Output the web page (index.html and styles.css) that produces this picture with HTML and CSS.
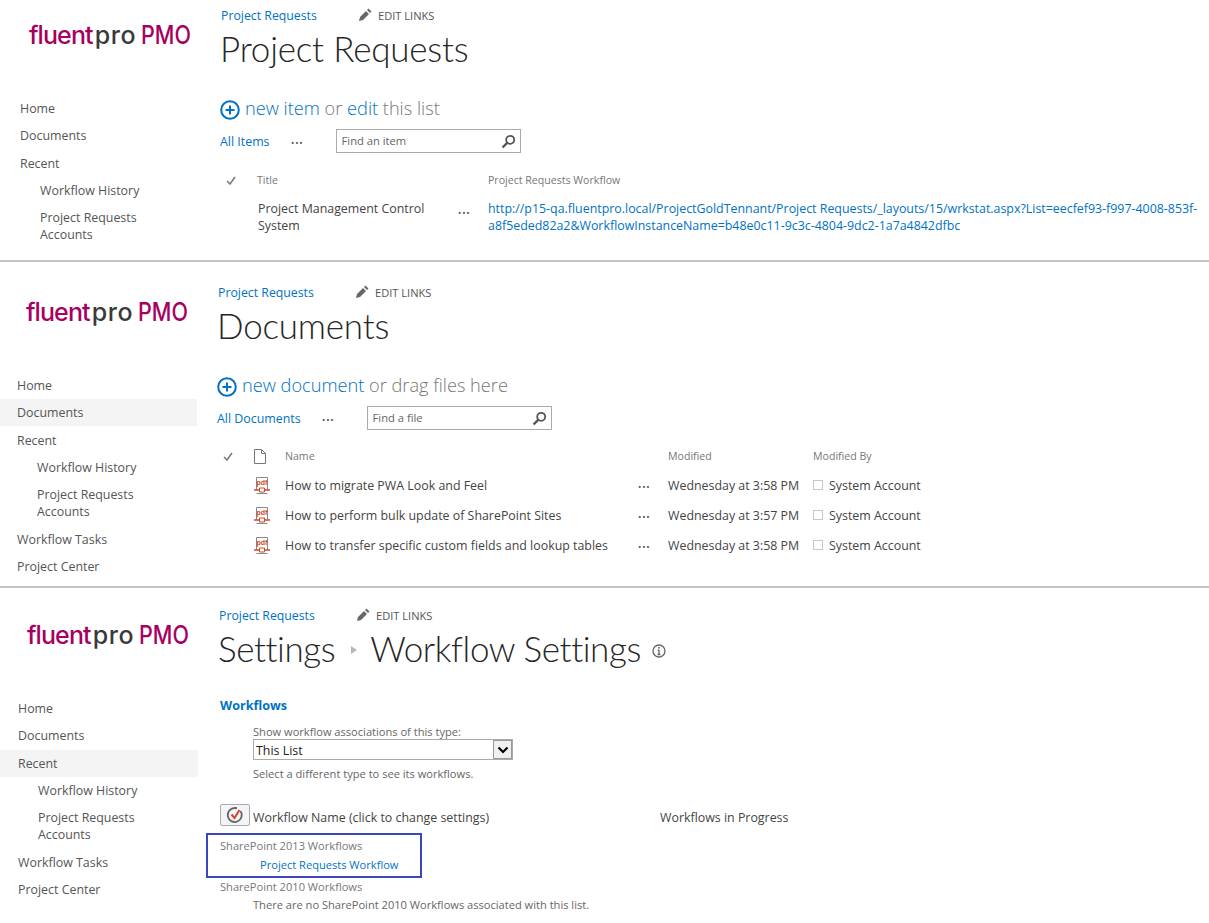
FILE: index.html
```html
<!DOCTYPE html>
<html>
<head>
	<title>Project Requests</title>
	<meta charset="utf-8">
	<link rel="stylesheet" href="styles.css">
</head>
<body>

<!-- list view -->
<section class="site site-list">
	<div class="side">
		<div class="logo"><span class="logo-fluent">fluent</span><span class="logo-pro">pro</span><span class="logo-pmo">PMO</span></div>
		<ul class="nav">
			<li>Home</li>
			<li>Documents</li>
			<li class="group">Recent</li>
			<li class="sub">Workflow History</li>
			<li class="sub">Project Requests<br>Accounts</li>
		</ul>
	</div>
	<div class="main">
		<div class="crumbs">
			<a class="crumb">Project Requests</a>
			<svg class="pencil" width="14" height="14" viewBox="0 0 14 14"><path d="M1 13l1-4 6-6 3 3-6 6zM9 2l1.500-1.500 3 3L12 5z" fill="#666"/></svg>
			<span class="edit">EDIT LINKS</span>
		</div>
		<h1 class="title">Project Requests</h1>
		<div class="command">
			<svg class="plus" width="20" height="20" viewBox="0 0 20 20"><circle cx="10" cy="10" r="8.8" fill="none" stroke="#0072c6" stroke-width="2"/><path d="M5.5 10h9M10 5.5v9" stroke="#0072c6" stroke-width="2"/></svg>
			<span><a>new item</a> or <a>edit</a> this list</span>
		</div>
		<div class="views">
			<a class="view view-items">All Items</a>
			<span class="dots">•••</span>
			<div class="search">
				<span>Find an item</span>
				<svg width="15" height="15" viewBox="0 0 15 15"><circle cx="9.2" cy="5.8" r="4" fill="none" stroke="#555" stroke-width="1.8"/><path d="M6.4 8.7L1.6 13.5" stroke="#555" stroke-width="2.4"/></svg>
			</div>
		</div>
		<div class="grid grid-list grid-head">
			<svg class="tick" width="10" height="9" viewBox="0 0 10 9"><path d="M1 5l3 3 5-7" fill="none" stroke="#777" stroke-width="1.5"/></svg>
			<span>Title</span>
			<span></span>
			<span>Project Requests Workflow</span>
		</div>
		<div class="grid grid-list row-tall">
			<span></span>
			<span class="cell-title">Project Management Control System</span>
			<span class="dots">•••</span>
			<a class="long-link">http://p15-qa.fluentpro.local/ProjectGoldTennant/Project Requests/_layouts/15/wrkstat.aspx?List=eecfef93-f997-4008-853f-<br>a8f5eded82a2&amp;WorkflowInstanceName=b48e0c11-9c3c-4804-9dc2-1a7a4842dfbc</a>
		</div>
	</div>
</section>

<!-- documents library -->
<section class="site site-docs">
	<div class="side">
		<div class="logo"><span class="logo-fluent">fluent</span><span class="logo-pro">pro</span><span class="logo-pmo">PMO</span></div>
		<ul class="nav">
			<li>Home</li>
			<li class="on">Documents</li>
			<li class="group">Recent</li>
			<li class="sub">Workflow History</li>
			<li class="sub">Project Requests<br>Accounts</li>
			<li class="group">Workflow Tasks</li>
			<li>Project Center</li>
		</ul>
	</div>
	<div class="main">
		<div class="crumbs">
			<a class="crumb">Project Requests</a>
			<svg class="pencil" width="14" height="14" viewBox="0 0 14 14"><path d="M1 13l1-4 6-6 3 3-6 6zM9 2l1.500-1.500 3 3L12 5z" fill="#666"/></svg>
			<span class="edit">EDIT LINKS</span>
		</div>
		<h1 class="title">Documents</h1>
		<div class="command">
			<svg class="plus" width="20" height="20" viewBox="0 0 20 20"><circle cx="10" cy="10" r="8.8" fill="none" stroke="#0072c6" stroke-width="2"/><path d="M5.5 10h9M10 5.5v9" stroke="#0072c6" stroke-width="2"/></svg>
			<span><a>new document</a> or drag files here</span>
		</div>
		<div class="views">
			<a class="view view-docs">All Documents</a>
			<span class="dots">•••</span>
			<div class="search">
				<span>Find a file</span>
				<svg width="15" height="15" viewBox="0 0 15 15"><circle cx="9.2" cy="5.8" r="4" fill="none" stroke="#555" stroke-width="1.8"/><path d="M6.4 8.7L1.6 13.5" stroke="#555" stroke-width="2.4"/></svg>
			</div>
		</div>
		<div class="grid grid-docs grid-head">
			<svg class="tick" width="10" height="9" viewBox="0 0 10 9"><path d="M1 5l3 3 5-7" fill="none" stroke="#777" stroke-width="1.5"/></svg>
			<svg class="page" width="12" height="15" viewBox="0 0 12 15"><path d="M.5.5h7l4 4v10H.5zM7.5.5v4h4" fill="none" stroke="#777"/></svg>
			<span>Name</span>
			<span></span>
			<span>Modified</span>
			<span>Modified By</span>
		</div>
		<div class="grid grid-docs row-doc">
			<span></span>
			<svg width="16" height="17" viewBox="0 0 16 17"><path d="M2.5 13V.5h11V13M2.5 16.5h11" fill="none" stroke="#8a8a8a"/><path d="M0 13h5M11 13h5" stroke="#d24726" stroke-width="1.6"/><path d="M5.5 11h5v4h-5z" fill="#fff" stroke="#d24726"/><text x="8" y="8" font-size="7" font-weight="700" text-anchor="middle" fill="#d24726" font-family="Liberation Sans, sans-serif">pdf</text></svg>
			<span>How to migrate PWA Look and Feel</span>
			<span class="dots">•••</span>
			<span>Wednesday at 3:58 PM</span>
			<span class="person"><i></i>System Account</span>
		</div>
		<div class="grid grid-docs row-doc">
			<span></span>
			<svg width="16" height="17" viewBox="0 0 16 17"><path d="M2.5 13V.5h11V13M2.5 16.5h11" fill="none" stroke="#8a8a8a"/><path d="M0 13h5M11 13h5" stroke="#d24726" stroke-width="1.6"/><path d="M5.5 11h5v4h-5z" fill="#fff" stroke="#d24726"/><text x="8" y="8" font-size="7" font-weight="700" text-anchor="middle" fill="#d24726" font-family="Liberation Sans, sans-serif">pdf</text></svg>
			<span>How to perform bulk update of SharePoint Sites</span>
			<span class="dots">•••</span>
			<span>Wednesday at 3:57 PM</span>
			<span class="person"><i></i>System Account</span>
		</div>
		<div class="grid grid-docs row-doc">
			<span></span>
			<svg width="16" height="17" viewBox="0 0 16 17"><path d="M2.5 13V.5h11V13M2.5 16.5h11" fill="none" stroke="#8a8a8a"/><path d="M0 13h5M11 13h5" stroke="#d24726" stroke-width="1.6"/><path d="M5.5 11h5v4h-5z" fill="#fff" stroke="#d24726"/><text x="8" y="8" font-size="7" font-weight="700" text-anchor="middle" fill="#d24726" font-family="Liberation Sans, sans-serif">pdf</text></svg>
			<span>How to transfer specific custom fields and lookup tables</span>
			<span class="dots">•••</span>
			<span>Wednesday at 3:58 PM</span>
			<span class="person"><i></i>System Account</span>
		</div>
	</div>
</section>

<!-- workflow settings -->
<section class="site site-settings">
	<div class="side">
		<div class="logo"><span class="logo-fluent">fluent</span><span class="logo-pro">pro</span><span class="logo-pmo">PMO</span></div>
		<ul class="nav">
			<li>Home</li>
			<li>Documents</li>
			<li class="group on">Recent</li>
			<li class="sub">Workflow History</li>
			<li class="sub">Project Requests<br>Accounts</li>
			<li class="group">Workflow Tasks</li>
			<li>Project Center</li>
		</ul>
	</div>
	<div class="main">
		<div class="crumbs">
			<a class="crumb">Project Requests</a>
			<svg class="pencil" width="14" height="14" viewBox="0 0 14 14"><path d="M1 13l1-4 6-6 3 3-6 6zM9 2l1.500-1.500 3 3L12 5z" fill="#666"/></svg>
			<span class="edit">EDIT LINKS</span>
		</div>
		<h1 class="title title-path">
			<span>Settings</span>
			<svg class="arrow" width="6" height="8" viewBox="0 0 6 8"><path d="M0 0l6 4-6 4z" fill="#b8b8b8"/></svg>
			<span>Workflow Settings</span>
			<svg class="info" width="14" height="14" viewBox="0 0 14 14"><circle cx="7" cy="7" r="6" fill="none" stroke="#666" stroke-width="1.3"/><path d="M7 6v4.500M5.500 10.500h3M5.800 6h1.200" fill="none" stroke="#666" stroke-width="1.3"/><rect x="6.200" y="3" width="1.600" height="1.600" fill="#666"/></svg>
		</h1>
		<h2 class="section">Workflows</h2>
		<div class="chooser">
			<div class="hint">Show workflow associations of this type:</div>
			<div class="select">
				<span>This List</span>
				<b><svg width="12" height="8" viewBox="0 0 12 8"><path d="M1.500 1.500L6 6l4.500-4.500" fill="none" stroke="#000" stroke-width="2.2"/></svg></b>
			</div>
			<div class="hint hint-below">Select a different type to see its workflows.</div>
		</div>
		<div class="wf-head">
			<button class="wf-btn"><svg width="18" height="18" viewBox="0 0 18 18"><path d="M14.500 5A7 7 0 1 1 9 2h2" fill="none" stroke="#666" stroke-width="1.8"/><path d="M5.500 8.500l3 3.500 5-8" fill="none" stroke="#d24726" stroke-width="2"/></svg></button>
			<span class="wf-name">Workflow Name (click to change settings)</span>
			<span class="wf-count">Workflows in Progress</span>
		</div>
		<div class="callout">
			<div class="wf-group">SharePoint 2013 Workflows</div>
			<a class="wf-link">Project Requests Workflow</a>
		</div>
		<div class="wf-group wf-group-plain">SharePoint 2010 Workflows</div>
		<div class="wf-none">There are no SharePoint 2010 Workflows associated with this list.</div>
	</div>
</section>

</body>
</html>
```

FILE: styles.css
```css
*{
	margin: 0px;
	padding: 0px;
	box-sizing: border-box;
}
html, body{
	height: 923px;
	overflow: hidden;
}
body{
	background-color: #fff;
	font-family: "Open Sans", "Liberation Sans", sans-serif;
	font-size: 12.4px;
	line-height: 17px;
	color: #444;
}
a{
	color: #0072c6;
}
svg{
	display: block;
}

/* one screenshot per section */
.site{
	display: flex;
	--inset: 20px;
}
.site-list{
	height: 262px;
	border-bottom: 2px solid #c4c4c4;
}
.site-docs{
	--inset: 17px;
	height: 326px;
	padding-top: 15px;
	border-bottom: 2px solid #c4c4c4;
}
.site-settings{
	--inset: 18px;
	padding-top: 12px;
}

/* left column */
.side{
	flex: none;
	width: calc(180px + var(--inset));
}
.logo{
	display: flex;
	height: 95px;
	padding: 18px 0 0 calc(var(--inset) + 9px);
	font-family: "Inter", sans-serif;
	font-size: 25px;
	line-height: 34px;
	font-weight: 500;
	white-space: nowrap;
}
.logo-fluent{
	color: #a8005f;
	letter-spacing: -0.9px;
}
.logo-pro{
	margin-left: 2px;
	color: #3a3a3a;
	letter-spacing: 0.6px;
}
.logo-pmo{
	margin-left: 5px;
	color: #a8005f;
	transform: scaleX(0.86);
	transform-origin: left center;
}
.nav{
	list-style: none;
}
.nav li{
	padding: 5px 0 5px var(--inset);
	color: #555;
}
.nav li.sub{
	padding-left: calc(var(--inset) + 20px);
}
.nav li.group{
	margin-top: 1px;
}
.nav li.on{
	background-color: #f4f4f4;
}

/* right column */
.main{
	flex: 1;
	min-width: 0;
	padding-left: 20px;
}
.crumbs{
	display: flex;
	align-items: center;
	height: 18px;
	margin: 6px 0 0 1px;
}
.crumb{
	width: 137px;
	font-size: 12.3px;
}
.pencil{
	margin-right: 6px;
}
.edit{
	color: #555;
	font-size: 11.1px;
}
.title{
	height: 44px;
	margin-top: 2px;
	font-family: "Lato", sans-serif;
	font-weight: 300;
	font-size: 35px;
	letter-spacing: -0.2px;
	line-height: 44px;
	color: #262626;
}
.command{
	display: flex;
	align-items: center;
	gap: 5px;
	height: 24px;
	margin-top: 26px;
	font-weight: 300;
	font-size: 18.2px;
	color: #777;
}
.plus{
	margin-top: 4px;
}
.views{
	display: flex;
	align-items: center;
	height: 24px;
	margin-top: 9px;
}
.view-items{
	width: 71px;
}
.view-docs{
	width: 105px;
}
.dots{
	padding-top: 2px;
	font-size: 9px;
	letter-spacing: 0.8px;
	color: #555;
}
.search{
	display: flex;
	align-items: center;
	justify-content: space-between;
	width: 185px;
	height: 24px;
	margin-left: 32px;
	padding: 0 4px 0 5px;
	border: 1px solid #ababab;
	font-size: 11.2px;
	color: #666;
}
.search span{
	padding-bottom: 2px;
}
.grid{
	display: grid;
	align-items: center;
}
.grid-head{
	height: 20px;
	margin-top: 16px;
	font-size: 10.6px;
	color: #777;
}
.tick{
	margin-left: 6px;
}
.grid-list{
	grid-template-columns: 37px 201px 30px 1fr;
}
.grid-list.grid-head{
	margin-top: 17px;
}
.row-tall{
	margin-top: 10px;
	align-items: start;
}
.cell-title{
	padding-left: 1px;
}
.row-tall .dots{
	padding-top: 4px;
}
.long-link{
	white-space: nowrap;
}
.grid-docs{
	grid-template-columns: 37px 31px 353px 30px 145px 1fr;
}
.row-doc{
	height: 30px;
}
.grid-docs.grid-head{
	margin-bottom: 4px;
}
.person{
	display: flex;
	align-items: center;
}
.person i{
	width: 10px;
	height: 10px;
	margin-right: 6px;
	border: 1px solid #c8c8c8;
}

/* workflow settings */
.title-path{
	display: flex;
	align-items: center;
	letter-spacing: -0.4px;
}
.arrow{
	margin: 4px 13px 0 16px;
}
.info{
	margin: 6px 0 0 11px;
}
.section{
	margin: 27px 0 0 2px;
	height: 18px;
	font-size: 12.6px;
	line-height: 18px;
	font-weight: 700;
	color: #0072c6;
}
.chooser{
	margin: 10px 0 0 35px;
}
.hint{
	height: 14px;
	line-height: 14px;
	font-size: 11.1px;
	color: #666;
}
.select{
	display: flex;
	justify-content: space-between;
	width: 260px;
	height: 21px;
	padding-left: 2px;
	border: 1px solid #ababab;
	line-height: 21px;
	color: #222;
}
.select b{
	display: flex;
	align-items: center;
	justify-content: center;
	width: 19px;
	border: 1px solid #999;
	background-color: #f0f0f0;
}
.hint-below{
	margin-top: 7px;
}
.wf-head{
	display: flex;
	align-items: center;
	height: 22px;
	margin: 23px 0 0 2px;
}
.wf-btn{
	display: flex;
	align-items: center;
	justify-content: center;
	width: 30px;
	height: 22px;
	border: 1px solid #ababab;
	border-radius: 2px;
	background-color: #f2f4f8;
}
.wf-name{
	width: 407px;
	margin-left: 3px;
	padding-top: 4px;
}
.wf-count{
	padding-top: 4px;
}
.callout{
	width: 216px;
	height: 45px;
	margin: 7px 0 0 -12px;
	padding: 2px 0 0 12px;
	border: 2px solid #3a47c0;
}
.wf-group{
	height: 18px;
	line-height: 18px;
	font-size: 11.1px;
	color: #777;
}
.wf-link{
	display: block;
	margin-left: 40px;
	line-height: 20px;
	font-size: 11.1px;
}
.wf-group-plain{
	margin: 0 0 0 2px;
}
.wf-none{
	margin-left: 35px;
	font-size: 11.1px;
	color: #666;
}
```
